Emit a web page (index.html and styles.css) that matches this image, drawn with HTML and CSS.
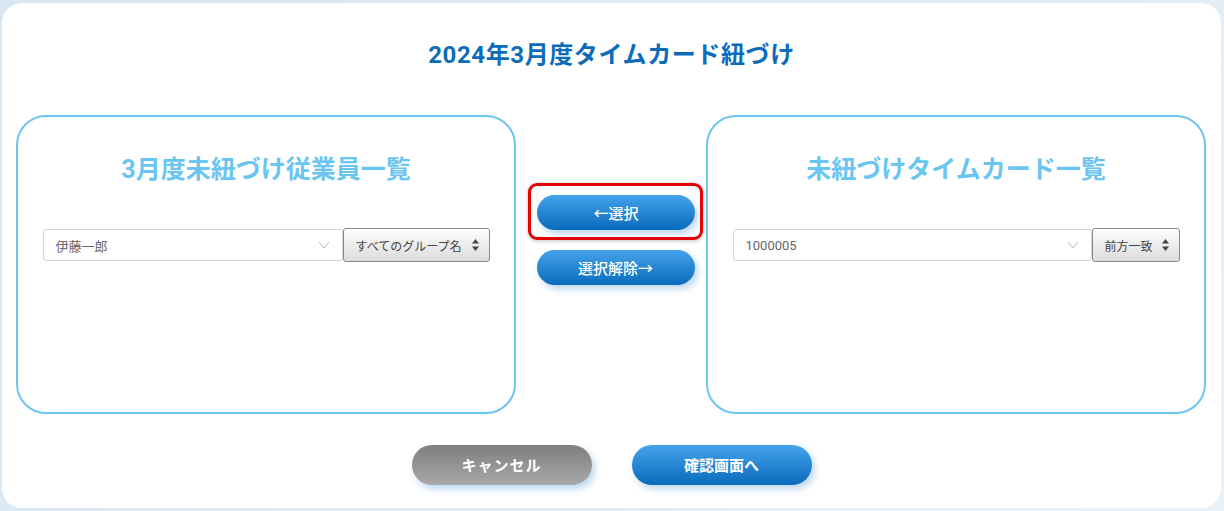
FILE: index.html
```html
<!DOCTYPE html>
<html lang="ja">
<head>
  <meta charset="UTF-8">
  <meta name="viewport" content="width=device-width, initial-scale=1.0">
  <title>タイムカード紐づけ</title>
  <link rel="stylesheet" href="styles.css">
</head>
<body>

  <div class="card">
    <h1 class="page-title">2024年3月度タイムカード紐づけ</h1>

    <div class="panels">
      <div class="panel">
        <h2 class="panel-title">3月度未紐づけ従業員一覧</h2>
        <div class="field-row">
          <div class="combo combo-left">
            <span>伊藤一郎</span>
            <svg class="chevron" width="12" height="8" viewBox="0 0 12 8"><polyline points="1,1 6,7 11,1" fill="none" stroke="#bbb" stroke-width="1"/></svg>
          </div>
          <div class="picker picker-left">
            <span>すべてのグループ名</span>
            <svg class="updown" width="7" height="12" viewBox="0 0 7 12"><polygon points="3.5,0 7,4.5 0,4.5" fill="#444"/><polygon points="0,7.5 7,7.5 3.5,12" fill="#444"/></svg>
          </div>
        </div>
      </div>

      <div class="middle">
        <div class="highlight">
          <button class="btn btn-blue btn-small">←選択</button>
        </div>
        <button class="btn btn-blue btn-small">選択解除→</button>
      </div>

      <div class="panel">
        <h2 class="panel-title">未紐づけタイムカード一覧</h2>
        <div class="field-row">
          <div class="combo combo-right">
            <span>1000005</span>
            <svg class="chevron" width="12" height="8" viewBox="0 0 12 8"><polyline points="1,1 6,7 11,1" fill="none" stroke="#bbb" stroke-width="1"/></svg>
          </div>
          <div class="picker picker-right">
            <span>前方一致</span>
            <svg class="updown" width="7" height="12" viewBox="0 0 7 12"><polygon points="3.5,0 7,4.5 0,4.5" fill="#444"/><polygon points="0,7.5 7,7.5 3.5,12" fill="#444"/></svg>
          </div>
        </div>
      </div>
    </div>

    <div class="actions">
      <button class="btn btn-gray btn-large">キャンセル</button>
      <button class="btn btn-blue btn-large">確認画面へ</button>
    </div>
  </div>

</body>
</html>
```

FILE: styles.css
```css
body {
  margin: 0;
  height: 511px;
  background: linear-gradient(135deg, #d6e6f3, #e8f1f8);
  font-family: Roboto, "Noto Sans CJK JP", sans-serif;
  overflow: hidden;
}

.card {
  box-sizing: border-box;
  margin: 3px 3px 0 2px;
  height: 505px;
  background: #fff;
  border-radius: 20px;
  padding-top: 37px;
  display: flex;
  flex-direction: column;
  align-items: center;
}

.page-title {
  margin: 0;
  font-size: 24px;
  line-height: 30px;
  font-weight: 700;
  letter-spacing: 0.6px;
  color: #0c6cba;
}

.panels {
  display: flex;
  margin-top: 45px;
  align-self: stretch;
  padding-left: 14px;
}

.panel {
  box-sizing: border-box;
  width: 500px;
  height: 299px;
  border: 2px solid #6bc5f1;
  border-radius: 30px;
  padding-top: 38px;
}

.panel-title {
  margin: 0;
  text-align: center;
  font-size: 25px;
  line-height: 30px;
  font-weight: 700;
  color: #6bc5f1;
}

.field-row {
  display: flex;
  justify-content: center;
  align-items: center;
  margin-top: 43px;
}

.combo {
  box-sizing: border-box;
  height: 32px;
  border: 1px solid #d4d4d4;
  border-radius: 3px;
  display: flex;
  align-items: center;
  justify-content: space-between;
  padding: 0 12px;
  font-size: 13px;
  color: #666;
}

.combo-left { width: 300px; }
.combo-right { width: 359px; }

.picker {
  box-sizing: border-box;
  height: 34px;
  border: 1px solid #8a8a8a;
  border-radius: 3px;
  background: linear-gradient(#fdfdfd, #dcdcdc);
  display: flex;
  align-items: center;
  justify-content: space-between;
  padding: 0 10px 0 12px;
  font-size: 12px;
  color: #444;
}

.picker-left { width: 147px; }
.picker-right { width: 88px; }

.middle {
  width: 190px;
  display: flex;
  flex-direction: column;
  align-items: center;
  padding-top: 68px;
  padding-left: 9px;
  box-sizing: border-box;
}

.highlight {
  border: 3px solid #e60000;
  border-radius: 9px;
  padding: 9px 5px 7px 6px;
  margin-bottom: 10px;
  box-shadow: 0 1px 4px rgba(0, 0, 0, 0.25);
}

.btn {
  border: none;
  border-radius: 20px;
  color: #fff;
  font-family: Roboto, "Noto Sans CJK JP", sans-serif;
  font-size: 15px;
  font-weight: 700;
  box-shadow: 3px 4px 7px rgba(60, 140, 210, 0.35);
}

.btn-blue {
  background: linear-gradient(#44a3ea, #0a6bbd);
}

.btn-gray {
  background: linear-gradient(#7e7e7e, #a9a9a9);
  letter-spacing: 1px;
}

.btn-small {
  width: 158px;
  height: 35px;
  font-weight: 500;
}

.btn-large {
  width: 180px;
  height: 40px;
  padding-bottom: 3px;
}

.actions {
  display: flex;
  gap: 40px;
  margin-top: 31px;
}
```
